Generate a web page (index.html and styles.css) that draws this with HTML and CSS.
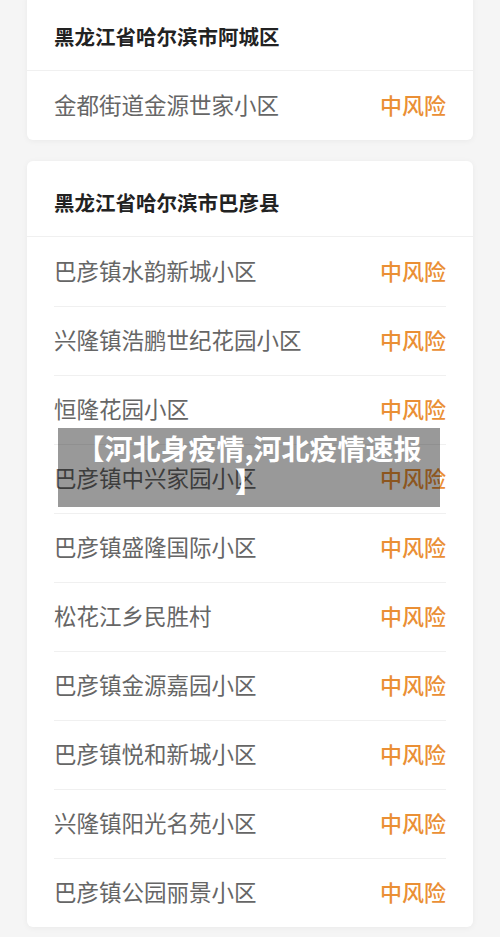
FILE: index.html
```html
<!DOCTYPE html>
<html lang="zh-CN">
<head>
    <meta charset="UTF-8">
    <title>河北疫情速报</title>
    <link rel="stylesheet" href="styles.css">
</head>
<body>
    <div class="page">
        <div class="card first">
            <div class="card-head">黑龙江省哈尔滨市阿城区</div>
            <div class="row"><span class="place">金都街道金源世家小区</span><span class="risk">中风险</span></div>
        </div>

        <div class="card">
            <div class="card-head">黑龙江省哈尔滨市巴彦县</div>
            <div class="row"><span class="place">巴彦镇水韵新城小区</span><span class="risk">中风险</span></div>
            <div class="row"><span class="place">兴隆镇浩鹏世纪花园小区</span><span class="risk">中风险</span></div>
            <div class="row"><span class="place">恒隆花园小区</span><span class="risk">中风险</span></div>
            <div class="row"><span class="place">巴彦镇中兴家园小区</span><span class="risk">中风险</span></div>
            <div class="row"><span class="place">巴彦镇盛隆国际小区</span><span class="risk">中风险</span></div>
            <div class="row"><span class="place">松花江乡民胜村</span><span class="risk">中风险</span></div>
            <div class="row"><span class="place">巴彦镇金源嘉园小区</span><span class="risk">中风险</span></div>
            <div class="row"><span class="place">巴彦镇悦和新城小区</span><span class="risk">中风险</span></div>
            <div class="row"><span class="place">兴隆镇阳光名苑小区</span><span class="risk">中风险</span></div>
            <div class="row"><span class="place">巴彦镇公园丽景小区</span><span class="risk">中风险</span></div>
        </div>
    </div>

    <div class="title-box">【河北身疫情,河北疫情速报<br>】</div>
</body>
</html>
```

FILE: styles.css
```css
body { margin: 0; background: #f5f5f5; font-family: "Noto Sans CJK SC", "Noto Sans", sans-serif; height: 937px; overflow: hidden; }
.page { padding: 0 27px; display: flex; flex-direction: column; gap: 21px; }
.card { background: #fff; border-radius: 6px; box-shadow: 0 1px 6px rgba(0,0,0,0.05); }
.card.first { margin-top: -5px; border-radius: 0 0 6px 6px; }
.card-head { height: 76px; padding: 6px 27px 0; box-sizing: border-box; display: flex; align-items: center; font-size: 20.5px; font-weight: bold; color: #222; border-bottom: 1px solid #f0f0f0; }
.row { height: 69px; margin: 0 27px; padding-bottom: 4px; display: flex; align-items: center; justify-content: space-between; border-top: 1px solid #f0f0f0; box-sizing: border-box; }
.card-head + .row { border-top: none; }
.place { font-size: 22.5px; color: #666; }
.risk { font-size: 22px; color: #ea8f35; font-weight: 500; }
.title-box { position: absolute; left: 58px; top: 428px; width: 382px; height: 79px; box-sizing: border-box; padding: 4px 8px 0; background: rgba(0,0,0,0.4); color: #fff; font-size: 28px; font-weight: bold; line-height: 33px; text-align: center; }
```
